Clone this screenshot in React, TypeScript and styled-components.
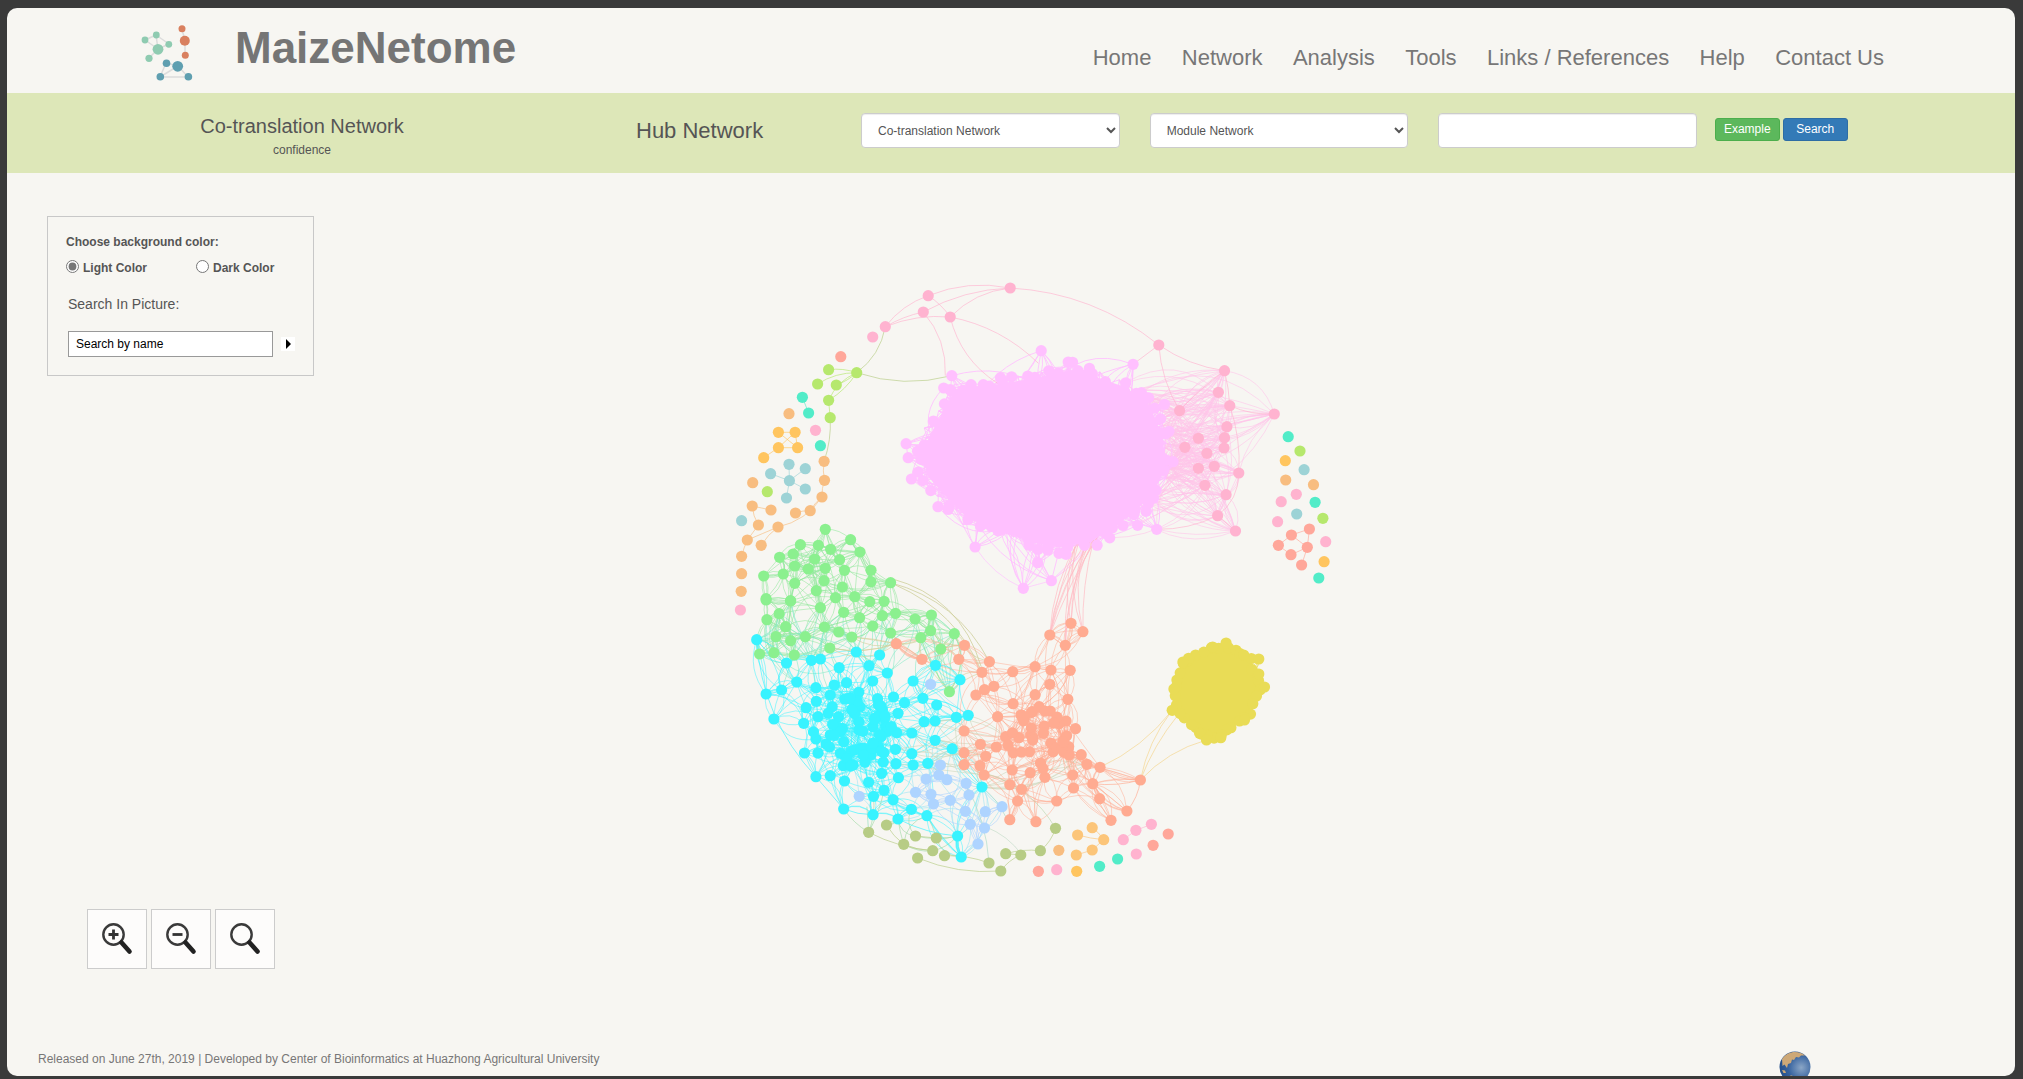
import React from "react";
import styled, { createGlobalStyle } from "styled-components";

const GlobalStyle = createGlobalStyle`
html,body{margin:0;padding:0;height:100%;overflow:hidden;background:#3a3a3a;}
body{font-family:"Liberation Sans",Arial,sans-serif;}
*{box-sizing:border-box;}
`;

const Frame = styled.div`
margin:8px 8px 3px 7px;
height:1068px;
background:#f7f6f2;
border-radius:10px;
overflow:hidden;
display:flex;
flex-direction:column;
`;
const Header = styled.header`
height:85px;
flex:none;
display:flex;
align-items:flex-start;
padding-left:134px;
padding-right:131px;
`;
const LogoSvg = styled.svg`
width:52px;
height:56px;
margin-top:17px;
flex:none;
`;
const Title = styled.h1`
margin:0 0 0 42px;
padding-top:15px;
font-size:44px;
line-height:50px;
font-weight:700;
color:#757575;
`;
const Nav = styled.nav`
margin-left:auto;
padding-top:37px;
display:flex;
gap:30.4px;
`;
const NavLink = styled.a`
font-size:22px;
line-height:26px;
color:#777;
`;
const Band = styled.div`
height:80px;
flex:none;
background:#dde7b8;
display:flex;
align-items:center;
`;
const BandTitle = styled.div`
width:590px;
flex:none;
text-align:center;
color:#555;
font-size:20px;
line-height:24px;
margin-top:5px;
small{
display:block;
font-size:12px;
line-height:16px;
margin-top:4px;
}
`;
const HubTitle = styled.div`
margin-left:39px;
width:127px;
flex:none;
font-size:22px;
color:#555;
white-space:nowrap;
margin-top:-4px;
`;
const Controls = styled.div`
margin-left:98px;
display:flex;
gap:30px;
margin-top:-5px;
`;
const Select = styled.select`
width:258.7px;
height:35px;
padding:6px 12px;
font-family:inherit;
font-size:12px;
color:#555;
background:#fff;
border:1px solid #ccc;
border-radius:4px;
box-shadow:inset 0 1px 1px rgba(0,0,0,.075);
`;
const TextInput = styled.input`
width:258.7px;
height:35px;
background:#fff;
border:1px solid #ccc;
border-radius:4px;
box-shadow:inset 0 1px 1px rgba(0,0,0,.075);
`;
const Buttons = styled.div`
margin-left:17.7px;
display:flex;
gap:3px;
margin-top:-8px;
`;
const Btn = styled.button<{ $tone: string; $edge: string }>`
width:65px;
height:23px;
padding:0;
font-family:inherit;
font-size:12px;
color:#fff;
background:${(p) => p.$tone};
border:1px solid ${(p) => p.$edge};
border-radius:3px;
`;
const Main = styled.main`
flex:1;
min-height:0;
display:flex;
`;
const LeftColumn = styled.div`
width:306px;
flex:none;
padding:43px 0 0 40px;
`;
const Panel = styled.div`
width:267px;
height:160px;
border:1px solid #c8c8c8;
padding:18px 0 0 18px;
color:#555;
`;
const PanelHead = styled.div`
font-size:12px;
font-weight:700;
line-height:15px;
`;
const RadioRow = styled.div`
display:flex;
margin-top:10px;
height:15px;
`;
const RadioLabel = styled.label<{ $w: number }>`
width:${(p) => p.$w}px;
display:flex;
align-items:center;
font-size:12px;
font-weight:700;
input{
margin:0 4px 2px 0;
width:13px;
height:13px;
accent-color:#777;
}
`;
const PanelLabel = styled.div`
font-size:14px;
line-height:16px;
margin:21px 0 0 2px;
`;
const SearchRow = styled.div`
display:flex;
align-items:center;
margin:19px 0 0 2px;
`;
const NameInput = styled.input`
width:205px;
height:26px;
padding:0 7px;
font-family:inherit;
font-size:12px;
color:#000;
background:#fff;
border:1px solid #999;
border-radius:0;
&::placeholder{color:#000;opacity:1;}
`;
const Go = styled.div`
width:14px;
height:14px;
margin-left:8px;
background:#fff;
display:flex;
align-items:center;
justify-content:center;
&::after{
content:"";
border-left:5px solid #000;
border-top:5px solid transparent;
border-bottom:5px solid transparent;
}
`;
const ZoomRow = styled.div`
margin:533px 0 0 40px;
display:flex;
gap:4px;
`;
const ZoomButton = styled.div`
width:60px;
height:60px;
background:#fdfcfb;
border:1px solid #ccc;
svg{display:block;}
`;
const GraphSvg = styled.svg`
width:660px;
height:620px;
margin:97px 0 0 387px;
flex:none;
`;
const Footer = styled.footer`
height:36px;
flex:none;
overflow:hidden;
display:flex;
align-items:flex-start;
padding:12px 204px 0 31px;
font-size:12px;
line-height:15px;
color:#777;
svg{margin:-1px 0 0 auto;flex:none;}
`;

// seeded so the picture is the same on every load
function mulberry(a: number) {
  return () => {
    a |= 0; a = (a + 0x6d2b79f5) | 0;
    let t = Math.imul(a ^ (a >>> 15), 1 | a);
    t = (t + Math.imul(t ^ (t >>> 7), 61 | t)) ^ t;
    return ((t ^ (t >>> 14)) >>> 0) / 4294967296;
  };
}
const rnd = mulberry(27);

type P = [number, number];
const z5 = (x: number, y: number): P => [720 + x / 2.45, 270 + y / 3];
const z6 = (x: number, y: number): P => [720 + x / 2.45, 600 + y / 3];
const list5 = (a: number[][]) => a.map((q) => z5(q[0], q[1]));
const list6 = (a: number[][]) => a.map((q) => z6(q[0], q[1]));

const arc = (a: P, b: P, bend: number) => {
  const dx = b[0] - a[0], dy = b[1] - a[1];
  const cx = (a[0] + b[0]) / 2 - dy * bend, cy = (a[1] + b[1]) / 2 + dx * bend;
  return `M${a[0].toFixed(1)} ${a[1].toFixed(1)}Q${cx.toFixed(1)} ${cy.toFixed(1)} ${b[0].toFixed(1)} ${b[1].toFixed(1)}`;
};
const dist = (a: P, b: P) => Math.hypot(a[0] - b[0], a[1] - b[1]);

function meshEdges(a: P[], b: P[], k: number, maxD: number) {
  let d = "";
  a.forEach((n) => {
    const near = b.filter((m) => m !== n && dist(m, n) < maxD).sort((p, q) => dist(p, n) - dist(q, n));
    for (let i = 0; i < k && near.length; i++) {
      const m = near[Math.floor(rnd() * rnd() * near.length)];
      d += arc(n, m, (rnd() - 0.5) * 0.8);
    }
  });
  return d;
}
function inPoly(p: P, poly: P[]) {
  let c = false;
  for (let i = 0, j = poly.length - 1; i < poly.length; j = i++) {
    const [xi, yi] = poly[i], [xj, yj] = poly[j];
    if (yi > p[1] !== yj > p[1] && p[0] < ((xj - xi) * (p[1] - yi)) / (yj - yi) + xi) c = !c;
  }
  return c;
}
function scatter(poly: P[], n: number) {
  const xs = poly.map((q) => q[0]), ys = poly.map((q) => q[1]);
  const x0 = Math.min(...xs), x1 = Math.max(...xs), y0 = Math.min(...ys), y1 = Math.max(...ys);
  const out: P[] = [];
  while (out.length < n) {
    const q: P = [x0 + rnd() * (x1 - x0), y0 + rnd() * (y1 - y0)];
    if (inPoly(q, poly)) out.push(q);
  }
  return out;
}
const ring = (poly: P[], step: number, jitter = 5) => {
  const out: P[] = [];
  poly.forEach((a, i) => {
    const b = poly[(i + 1) % poly.length];
    const n = Math.max(1, Math.round(dist(a, b) / step));
    for (let t = 0; t < n; t++) out.push([a[0] + ((b[0] - a[0]) * t) / n + (rnd() - 0.5) * jitter, a[1] + ((b[1] - a[1]) * t) / n + (rnd() - 0.5) * jitter]);
  });
  return out;
};
const shrink = (poly: P[], f: number): P[] => {
  const cx = poly.reduce((s, q) => s + q[0], 0) / poly.length, cy = poly.reduce((s, q) => s + q[1], 0) / poly.length;
  return poly.map((q) => [cx + (q[0] - cx) * f, cy + (q[1] - cy) * f]);
};
const polyPath = (poly: P[]) => "M" + poly.map((q) => q.map((v) => v.toFixed(1)).join(" ")).join("L") + "Z";

const C = {
  blob: "#ffc0ff", hub: "#ffb3d0", peach: "#ffab91", yellow: "#e9dc56", cyan: "#38f3ff", green: "#8bf08f",
  sky: "#aed4ff", olive: "#b7cc85", pale: "#f8bd80", amber: "#ffc55f", teal: "#52ecc8", lime: "#b6e86d",
  slate: "#9dd3d6", salmon: "#ffa79a", pink: "#ffb3cf", apricot: "#fcc579",
};

const blobPoly = list5([[570,350],[680,335],[780,315],[870,290],[1000,345],[1060,400],[1095,500],[1100,600],[1060,690],[980,770],[910,825],[830,840],[760,825],[680,785],[600,750],[545,680],[500,620],[485,545],[525,450]]);
const yellowPoly = list6([[1205,150],[1240,145],[1300,180],[1318,225],[1320,265],[1295,340],[1270,370],[1225,405],[1190,410],[1165,390],[1125,335],[1120,265],[1135,195],[1160,170]]);

const hubs = list5([[510,77],[711,54],[498,126],[564,141],[405,170],[374,201],[1075,225],[1236,302],[1221,367],[1249,407],[1126,422],[1358,432],[1242,470],[1236,503],[1235,534],[1172,505],[1139,532],[1193,550],[1172,595],[1211,589],[1271,609],[1188,646],[1240,674],[1219,737],[1263,783]]);
const blobTips = list5([[787,242],[853,276],[905,295],[1012,283],[568,317],[548,354],[456,521],[461,563],[469,627],[534,710],[625,831],[743,955],[812,932],[848,853],[778,878],[1070,778],[1023,766],[1089,403],[1100,484],[1110,575],[1087,601],[1042,383],[1020,370]]);
const blobCore = shrink(blobPoly, 0.97);
const blobInner = scatter(blobCore, 200);
const blobEdge = ring(blobPoly, 7, 9);
const blobDots = blobEdge.filter(() => rnd() < 0.6);
const rightHubs = hubs.slice(7);
const blobRight = blobEdge.filter((q) => q[0] > 1090);

const green = [
  ...list5([[258,778],[320,809],[197,824],[241,826],[271,838],[343,846],[146,862],[179,852],[232,867],[293,869],[183,888],[216,897],[258,895],[305,901],[370,901],[107,918],[155,912],[183,940],[255,932],[300,951],[370,935],[418,938],[113,986],[173,992],[236,962],[283,983],[330,980],[367,995],[402,994]]),
  ...list6([[113,0],[173,3],[145,41],[115,59],[161,80],[137,110],[173,122],[209,110],[97,162],[132,158],[182,165],[246,23],[303,37],[342,53],[398,47],[430,40],[478,57],[518,45],[256,81],[291,96],[374,78],[323,111],[418,99],[492,113],[516,92],[574,101],[269,144],[541,147],[562,275]]),
];
const cyanCore = scatter(list6([[240,310],[330,290],[410,320],[430,400],[400,470],[320,500],[250,450],[220,380]]), 40);
const cyan = [...list6([[90,119],[163,189],[224,181],[246,177],[334,156],[391,165],[365,197],[292,203],[410,219],[528,196],[588,239],[473,243],[374,243],[310,248],[188,246],[235,263],[280,255],[151,270],[113,282],[340,277],[270,285],[497,295],[425,291],[386,296],[312,296],[236,304],[452,308],[531,315],[211,323],[275,320],[343,320],[398,330],[436,340],[608,346],[579,352],[132,357],[205,370],[240,350],[290,350],[340,365],[500,365],[527,363],[380,355],[406,380],[433,398],[470,399],[235,417],[300,385],[340,390],[527,421],[569,446],[260,432],[346,445],[388,440],[430,448],[207,459],[240,459],[295,460],[320,455],[370,465],[470,461],[400,486],[431,491],[473,495],[509,490],[302,497],[326,495],[355,487],[235,530],[270,527],[305,543],[396,520],[437,533],[364,547],[642,561],[402,571],[376,589],[424,599],[303,627],[469,628],[375,644],[507,647],[436,657],[582,708],[591,771]]), ...cyanCore];
const sky = list6([[516,253],[540,495],[536,525],[505,537],[556,539],[603,550],[341,589],[479,577],[517,583],[610,585],[564,601],[523,612],[601,634],[650,635],[691,620],[613,673],[648,684],[632,732]]);
const peachCore = scatter(list6([[740,340],[810,330],[850,380],[860,480],[800,510],[720,490],[700,420]]), 35);
const peach = [...list6([[432,131],[495,178],[599,136],[585,178],[660,185],[642,217],[717,215],[772,200],[811,210],[858,211],[808,105],[860,70],[889,95],[846,136],[808,253],[671,259],[648,269],[627,285],[772,284],[852,298],[718,311],[680,350],[738,345],[765,335],[782,320],[809,333],[848,363],[871,386],[598,393],[700,410],[638,433],[677,441],[598,458],[651,469],[598,494],[637,497],[647,525],[885,464],[899,493],[931,502],[716,510],[760,518],[796,532],[864,525],[710,554],[739,568],[866,564],[913,551],[729,603],[825,603]]), ...peachCore];
const peachOuter = list6([[1030,540],[930,596],[997,633],[710,659],[774,665],[958,661]]);
const olive = list6([[822,685],[408,675],[364,697],[479,708],[530,714],[450,733],[521,752],[550,767],[484,774],[659,789],[700,761],[737,765],[785,752],[688,813]]);
const yellowTips = list6([[1207,141],[1240,129],[1320,177],[1320,222],[1334,261],[1148,175],[1134,186],[1112,267],[1108,331],[1285,360],[1175,400],[1192,420],[1227,413],[1283,165]]);

const singles: { pts: P[]; fill: string }[] = [
  { pts: list5([[266,299],[335,308],[239,342],[285,345],[266,391],[270,443],[116,665],[1421,543],[1477,745]]), fill: C.lime },
  { pts: [...list5([[296,260],[1444,777],[1400,795],[1439,832],[1368,826],[1399,854],[1425,885]]), ...list6([[1098,702],[1061,736],[780,814]])], fill: C.salmon },
  { pts: [...list5([[202,382],[217,429],[246,527],[1392,500],[1458,697],[1467,924]]), ...list6([[974,777],[930,799]])], fill: C.teal },
  { pts: [...list5([[169,431],[255,574],[256,631],[250,681],[221,722],[185,729],[80,638],[79,708],[125,720],[94,765],[142,771],[67,810],[101,826],[53,859],[53,911],[52,964],[1386,630],[1454,644]]), ...list6([[830,751]])], fill: C.pale },
  { pts: [...list5([[143,487],[184,487],[143,533],[190,533],[107,563],[1385,572],[1480,875]]), ...list6([[874,814]])], fill: C.amber },
  { pts: list6([[876,705],[912,683],[940,719],[912,750],[873,765]]), fill: C.apricot },
  { pts: [...list5([[234,481],[50,1020],[1412,673],[1375,695],[1366,755],[1484,815]]), ...list6([[1019,691],[1057,673],[988,719],[1020,762],[825,809]])], fill: C.pink },
  { pts: list5([[169,583],[209,596],[124,611],[170,632],[209,657],[163,684],[53,752],[1431,599],[1413,732]]), fill: C.slate },
];

// [from, to, bend, colour]
const A5 = (a: number, b: number, c: number, d: number, bend: number, col: string): [P, P, number, string] => [z5(a, b), z5(c, d), bend, col];
const A6 = (a: number, b: number, c: number, d: number, bend: number, col: string): [P, P, number, string] => [z6(a, b), z6(c, d), bend, col];
const arcs: [P, P, number, string][] = [
  A5(711,54,1075,225,-0.16,C.hub), A5(1075,225,1236,302,0.12,C.hub), A5(1075,225,1126,422,0.12,C.hub), A5(711,54,510,77,0.15,C.hub),
  A5(711,54,498,126,0.12,C.hub), A5(711,54,564,141,0.18,C.hub), A5(564,141,780,280,-0.15,C.hub), A5(498,126,552,317,-0.2,C.hub),
  A5(510,77,405,170,0.15,C.hub), A5(405,170,564,141,-0.12,C.hub), A5(405,170,498,126,-0.08,C.hub), A5(510,77,564,141,-0.1,C.hub),
  A5(564,141,680,340,0.2,C.hub), A5(1236,302,1249,407,-0.05,C.hub), A5(1249,407,1358,432,0.12,C.hub), A5(1012,283,1075,225,0,C.hub),
  A5(1236,302,1126,422,0.05,C.hub), A5(1249,407,1271,609,-0.1,C.hub), A5(1271,609,1219,737,-0.25,C.hub), A5(1219,737,1070,778,-0.12,C.hub),
  A5(1219,737,1263,783,0,C.hub), A5(743,955,625,831,-0.15,C.blob), A5(743,955,812,932,0,C.blob),
  A5(405,170,335,308,-0.2,C.olive), A5(335,308,568,317,0.15,C.olive), A5(266,299,335,308,-0.12,C.lime), A5(239,342,335,308,-0.15,C.lime),
  A5(285,345,335,308,0.1,C.lime), A5(266,391,335,308,0.12,C.lime), A5(266,391,335,308,-0.2,C.lime), A5(270,443,266,391,0,C.lime),
  A5(270,443,255,574,-0.1,C.olive), A5(255,574,256,631,0.1,C.pale), A5(256,631,250,681,0.1,C.pale), A5(250,681,221,722,0.1,C.pale),
  A5(221,722,185,729,0.1,C.pale), A5(250,681,142,771,-0.2,C.pale), A5(79,708,125,720,0,C.pale), A5(79,708,94,765,0.12,C.pale),
  A5(94,765,67,810,0,C.pale), A5(142,771,67,810,0,C.pale), A5(142,771,101,826,0.1,C.pale), A5(67,810,53,859,0.05,C.pale),
  A5(143,487,184,487,0,C.amber), A5(143,487,190,533,0,C.amber), A5(184,487,190,533,0,C.amber), A5(143,533,190,533,0,C.amber), A5(184,487,143,533,0,C.amber), A5(107,563,143,533,0,C.amber),
  A5(169,583,170,632,0,C.slate), A5(209,596,170,632,0,C.slate), A5(124,611,170,632,0,C.slate), A5(170,632,163,684,0,C.slate), A5(170,632,209,657,0,C.slate),
  A5(202,382,217,429,0,C.teal), A5(1400,795,1444,777,0,C.salmon), A5(1400,795,1439,832,0,C.salmon), A5(1368,826,1400,795,0,C.salmon), A5(1368,826,1399,854,0,C.salmon), A5(1399,854,1439,832,0,C.salmon), A5(1439,832,1425,885,0,C.salmon), A5(1444,777,1439,832,0,C.salmon),
  A6(822,685,785,752,-0.15,C.olive), A6(785,752,700,761,0.1,C.olive), A6(737,765,688,813,0.15,C.olive), A6(700,761,737,765,0,C.olive), A6(659,789,550,767,0.1,C.olive), A6(688,813,484,774,-0.12,C.olive),
  A6(364,697,521,752,0.1,C.olive), A6(408,675,450,733,0.1,C.olive), A6(479,708,530,714,0,C.olive), A6(450,733,521,752,0.1,C.olive),
  A6(876,705,940,719,0.05,C.apricot), A6(912,683,940,719,-0.1,C.apricot), A6(940,719,912,750,0,C.apricot), A6(912,750,873,765,0,C.apricot),
  A6(1019,691,1057,673,0,C.pink), A6(1019,691,988,719,0,C.pink),
  A6(931,502,1108,331,0.12,"#f4d48a"), A6(1030,540,1108,331,-0.12,"#f4d48a"), A6(1030,540,1122,345,-0.08,"#f4d48a"), A6(1030,540,1192,420,-0.14,"#f4d48a"),
  A6(931,502,1030,540,0.18,C.peach), A6(913,551,1030,540,0.1,C.peach), A6(1030,540,997,633,-0.15,C.peach), A6(930,596,997,633,0.15,C.peach),
  A6(913,551,958,661,0.12,C.peach), A6(710,659,729,603,0,C.peach), A6(774,665,740,560,-0.1,C.peach), A6(822,685,650,520,0.2,"#bcd7b0"),
  A6(90,119,235,530,0.18,C.cyan), A6(235,530,303,627,0,C.cyan), A6(303,627,375,644,0.1,C.cyan), A6(507,647,591,771,0.08,C.cyan), A6(436,657,582,708,0.1,C.cyan), A6(364,697,360,620,0,"#8de0b8"),
  A6(659,789,600,550,0.12,"#a9dbc7"), A6(740,765,650,680,0.15,"#c3dcc8"), A6(700,650,640,560,0.12,"#a9dbc7"),
];
const oliveLong: [P, P, number][] = [
  [z5(418, 938), z6(660, 185), -0.22], [z5(430, 945), z6(642, 217), -0.2], [z5(418, 925), z6(640, 200), -0.28],
];
const trunks: [P, P, number][] = [];
[[880,810],[895,820],[905,815],[915,810],[930,790],[870,830]].forEach((t, i) => {
  [[808,105],[860,70],[846,136],[889,95]].forEach((e, j) => {
    if ((i + j) % 2 === 0 || j === 0) trunks.push([z5(t[0], t[1]), z6(e[0], e[1]), 0.04 + rnd() * 0.12]);
  });
});

const allPeach = [...peach, ...peachOuter];
const graph = {
  blob: meshEdges(blobEdge, blobInner, 6, 110) + meshEdges(blobTips, blobInner, 9, 130),
  hub: meshEdges(rightHubs, rightHubs, 4, 120) + meshEdges(rightHubs, blobRight.concat(blobTips.slice(15)), 14, 240) + meshEdges(hubs.slice(7, 11), blobEdge.filter((q) => q[1] < 420), 4, 200),
  green: meshEdges(green, green, 8, 65),
  cyan: meshEdges(cyan, cyan, 7, 60),
  gc: meshEdges(green.slice(30), cyan.slice(0, 30), 3, 80),
  sky: meshEdges(sky, sky, 4, 55),
  sc: meshEdges(sky, cyan, 3, 70),
  peach: meshEdges(allPeach, peach, 7, 65),
  pc: meshEdges(peach.slice(28, 40), cyan.slice(30, 75), 3, 110),
  gp: meshEdges(green.slice(50), peach.slice(0, 10), 3, 90),
  yellow: meshEdges(yellowTips, scatter(yellowPoly, 30), 5, 80),
  oc: meshEdges(olive.slice(1, 6), cyan.slice(60, 85), 3, 70),
};

const Edges = ({ d, color, op = 0.5 }: { d: string; color: string; op?: number }) => (
  <path d={d} fill="none" stroke={color} strokeWidth={1} opacity={op} />
);
const Dots = ({ pts, fill, r = 5.6 }: { pts: P[]; fill: string; r?: number }) => (
  <g fill={fill}>
    {pts.map((q, i) => (
      <circle key={i} cx={q[0].toFixed(1)} cy={q[1].toFixed(1)} r={r} />
    ))}
  </g>
);
const yellowRing = ring(yellowPoly, 8);

function Network() {
  return (
    <GraphSvg viewBox="700 270 660 620">
      <Edges d={graph.hub} color="#ffc4ea" op={0.6} />
      <Edges d={graph.blob} color={C.blob} op={0.85} />
      <Edges d={graph.green} color="#8fe89a" op={0.55} />
      <Edges d={graph.gc} color="#7fe9c4" op={0.55} />
      <Edges d={graph.cyan} color={C.cyan} op={0.5} />
      <Edges d={graph.sc} color="#9fe4f4" op={0.6} />
      <Edges d={graph.sky} color={C.sky} op={0.6} />
      <Edges d={graph.gp} color="#d4cf9a" op={0.6} />
      <Edges d={graph.pc} color="#c9d6b8" op={0.55} />
      <Edges d={graph.oc} color="#9ed8a4" op={0.6} />
      <Edges d={graph.peach} color={C.peach} op={0.5} />
      {trunks.map((t, i) => (
        <path key={i} d={arc(t[0], t[1], t[2])} fill="none" stroke="#ffbcc4" strokeWidth={1} opacity={0.7} />
      ))}
      {oliveLong.map((t, i) => (
        <path key={i} d={arc(t[0], t[1], t[2])} fill="none" stroke="#cfcf9c" strokeWidth={1} opacity={0.8} />
      ))}
      {arcs.map((t, i) => (
        <path key={i} d={arc(t[0], t[1], t[2])} fill="none" stroke={t[3]} strokeWidth={1} opacity={0.65} />
      ))}
      <Edges d={graph.yellow} color={C.yellow} op={0.6} />
      <path d={polyPath(blobCore)} fill={C.blob} />
      <Dots pts={blobDots} fill={C.blob} />
      <Dots pts={blobTips} fill={C.blob} />
      <path d={polyPath(yellowPoly)} fill={C.yellow} />
      <Dots pts={yellowRing} fill={C.yellow} />
      <Dots pts={yellowTips} fill={C.yellow} />
      <Dots pts={hubs} fill={C.hub} />
      <Dots pts={green} fill={C.green} />
      <Dots pts={sky} fill={C.sky} />
      <Dots pts={allPeach} fill={C.peach} />
      <Dots pts={cyan} fill={C.cyan} />
      <Dots pts={olive} fill={C.olive} />
      {singles.map((s, i) => (
        <Dots key={i} pts={s.pts} fill={s.fill} />
      ))}
    </GraphSvg>
  );
}

function Logo() {
  return (
    <LogoSvg viewBox="0 0 52 56">
      <g stroke="#dcdcdc" strokeWidth={1.5} fill="none">
        <path d="M15 10L4 15L17 24L28 19L15 10L17 24L8 33M41 4L44 16L44 30M25 38L37 41L47 52L19 52L25 38M19 52L37 41" />
      </g>
      <g fill="#8fcbb1">
        <circle cx={15.3} cy={10} r={3.4} /><circle cx={4} cy={15} r={3.4} /><circle cx={27.8} cy={19.3} r={3.4} />
        <circle cx={17} cy={24.3} r={5.4} /><circle cx={8} cy={33.3} r={3.6} />
      </g>
      <g fill="#d9805f">
        <circle cx={41} cy={3.7} r={3.5} /><circle cx={43.8} cy={15.7} r={5} /><circle cx={44.3} cy={30.3} r={3.5} />
      </g>
      <g fill="#5f9fb0">
        <circle cx={25.5} cy={38.3} r={3.8} /><circle cx={36.7} cy={41.3} r={5.4} /><circle cx={19.3} cy={51.7} r={3.8} /><circle cx={47.4} cy={51.7} r={3.8} />
      </g>
    </LogoSvg>
  );
}

function Magnifier({ mark }: { mark?: "plus" | "minus" }) {
  return (
    <svg width={58} height={58} viewBox="0 0 58 58">
      <circle cx={25.5} cy={24.5} r={10.2} fill="none" stroke="#3a3a3a" strokeWidth={2.4} />
      <path d="M33.5 32.5L41.5 41.5" stroke="#222" strokeWidth={4.6} strokeLinecap="round" />
      {mark && <path d={mark === "plus" ? "M20.5 24.5H30.5M25.5 19.5V29.5" : "M20.5 24.5H30.5"} stroke="#333" strokeWidth={2.8} />}
    </svg>
  );
}

function Globe() {
  return (
    <svg width={32} height={32} viewBox="0 0 32 32">
      <defs>
        <radialGradient id="sea" cx="0.7" cy="0.52" r="0.75">
          <stop offset="0" stopColor="#8ba6c6" />
          <stop offset="0.55" stopColor="#37639f" />
          <stop offset="1" stopColor="#1f4a86" />
        </radialGradient>
      </defs>
      <circle cx={16} cy={16} r={15.5} fill="url(#sea)" />
      <path d="M3 8C6 3.5 11 1 16 1C20 1 23.5 2.5 26 4.5L22 4.5L20 6.5L17 6L15 9L13 8.5L12 12L9 13L8 17L5.5 13.5L3.5 15L3 8Z" fill="#cda877" />
      <path d="M3 19L6 19.5L7 22L4.5 22Z M11 24L14 25L13 26Z" fill="#cda877" />
    </svg>
  );
}

export default function App() {
  return (
    <>
      <GlobalStyle />
      <Frame>
        <Header>
          <Logo />
          <Title>MaizeNetome</Title>
          <Nav>
            {["Home", "Network", "Analysis", "Tools", "Links / References", "Help", "Contact Us"].map((t) => (
              <NavLink key={t}>{t}</NavLink>
            ))}
          </Nav>
        </Header>
        <Band>
          <BandTitle>
            Co-translation Network
            <small>confidence</small>
          </BandTitle>
          <HubTitle>Hub Network</HubTitle>
          <Controls>
            <Select defaultValue="co">
              <option value="co">Co-translation Network</option>
            </Select>
            <Select defaultValue="mod">
              <option value="mod">Module Network</option>
            </Select>
            <TextInput />
          </Controls>
          <Buttons>
            <Btn $tone="#5cb85c" $edge="#4cae4c">Example</Btn>
            <Btn $tone="#337ab7" $edge="#2e6da4">Search</Btn>
          </Buttons>
        </Band>
        <Main>
          <LeftColumn>
            <Panel>
              <PanelHead>Choose background color:</PanelHead>
              <RadioRow>
                <RadioLabel $w={130}><input type="radio" name="bg" defaultChecked />Light Color</RadioLabel>
                <RadioLabel $w={90}><input type="radio" name="bg" />Dark Color</RadioLabel>
              </RadioRow>
              <PanelLabel>Search In Picture:</PanelLabel>
              <SearchRow>
                <NameInput placeholder="Search by name" />
                <Go />
              </SearchRow>
            </Panel>
            <ZoomRow>
              <ZoomButton><Magnifier mark="plus" /></ZoomButton>
              <ZoomButton><Magnifier mark="minus" /></ZoomButton>
              <ZoomButton><Magnifier /></ZoomButton>
            </ZoomRow>
          </LeftColumn>
          <Network />
        </Main>
        <Footer>
          <span>Released on June 27th, 2019 | Developed by Center of Bioinformatics at Huazhong Agricultural University</span>
          <Globe />
        </Footer>
      </Frame>
    </>
  );
}
